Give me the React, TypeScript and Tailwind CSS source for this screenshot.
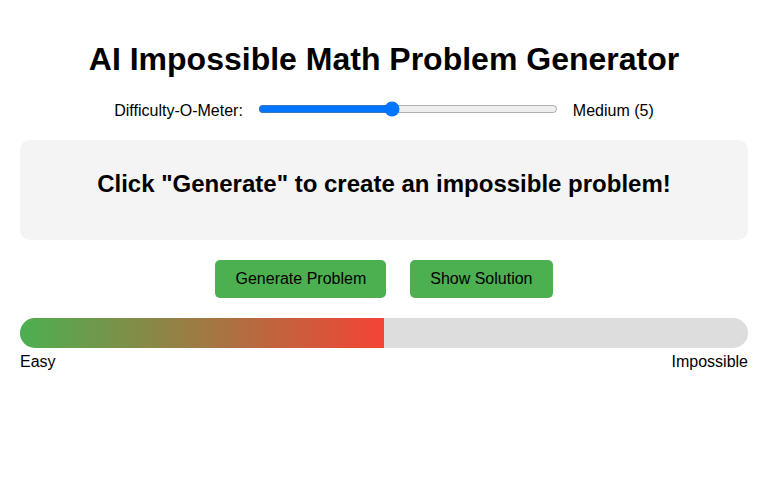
import React, { useState } from 'react';

const App = () => {
  const [level, setLevel] = useState(5);

  return (
    <div className="min-h-screen bg-white px-5 text-black" style={{ fontFamily: '"Liberation Sans", Arial, sans-serif' }}>
      {/* Title */}
      <h1 className="pt-[41px] text-center text-[32px] font-bold leading-[37px]">
        AI Impossible Math Problem Generator
      </h1>

      {/* Difficulty slider */}
      <div className="mt-[22px] flex h-[22px] items-center justify-center text-base">
        <label className="mr-[13px]">Difficulty-O-Meter:</label>
        <input
          type="range"
          min={1}
          max={10}
          value={level}
          onChange={(e) => setLevel(Number(e.target.value))}
          className="mx-[2px] mb-[5px] w-[300px] accent-[#0075ff]"
        />
        <span className="ml-[13px]">Medium ({level})</span>
      </div>

      {/* Problem box */}
      <div className="mt-[18px] h-[100px] rounded-[10px] bg-[#f4f4f4] px-5 pt-[30px] text-center">
        <p className="text-2xl font-bold leading-7">Click "Generate" to create an impossible problem!</p>
      </div>

      {/* Buttons */}
      <div className="mt-5 flex justify-center gap-6">
        <button className="rounded-[5px] bg-[#4caf50] px-5 py-[10px] text-base leading-[18px]">Generate Problem</button>
        <button className="rounded-[5px] bg-[#4caf50] px-5 py-[10px] text-base leading-[18px]">Show Solution</button>
      </div>

      {/* Meter */}
      <div className="mt-5 h-[30px] overflow-hidden rounded-[15px] bg-[#dddddd]">
        <div className="h-full bg-[linear-gradient(to_right,#4caf50,#f44336)]" style={{ width: `${(level / 10) * 100}%` }} />
      </div>
      <div className="mt-[5px] flex justify-between text-base leading-[18px]">
        <span>Easy</span>
        <span>Impossible</span>
      </div>
    </div>
  );
};

export default App;
